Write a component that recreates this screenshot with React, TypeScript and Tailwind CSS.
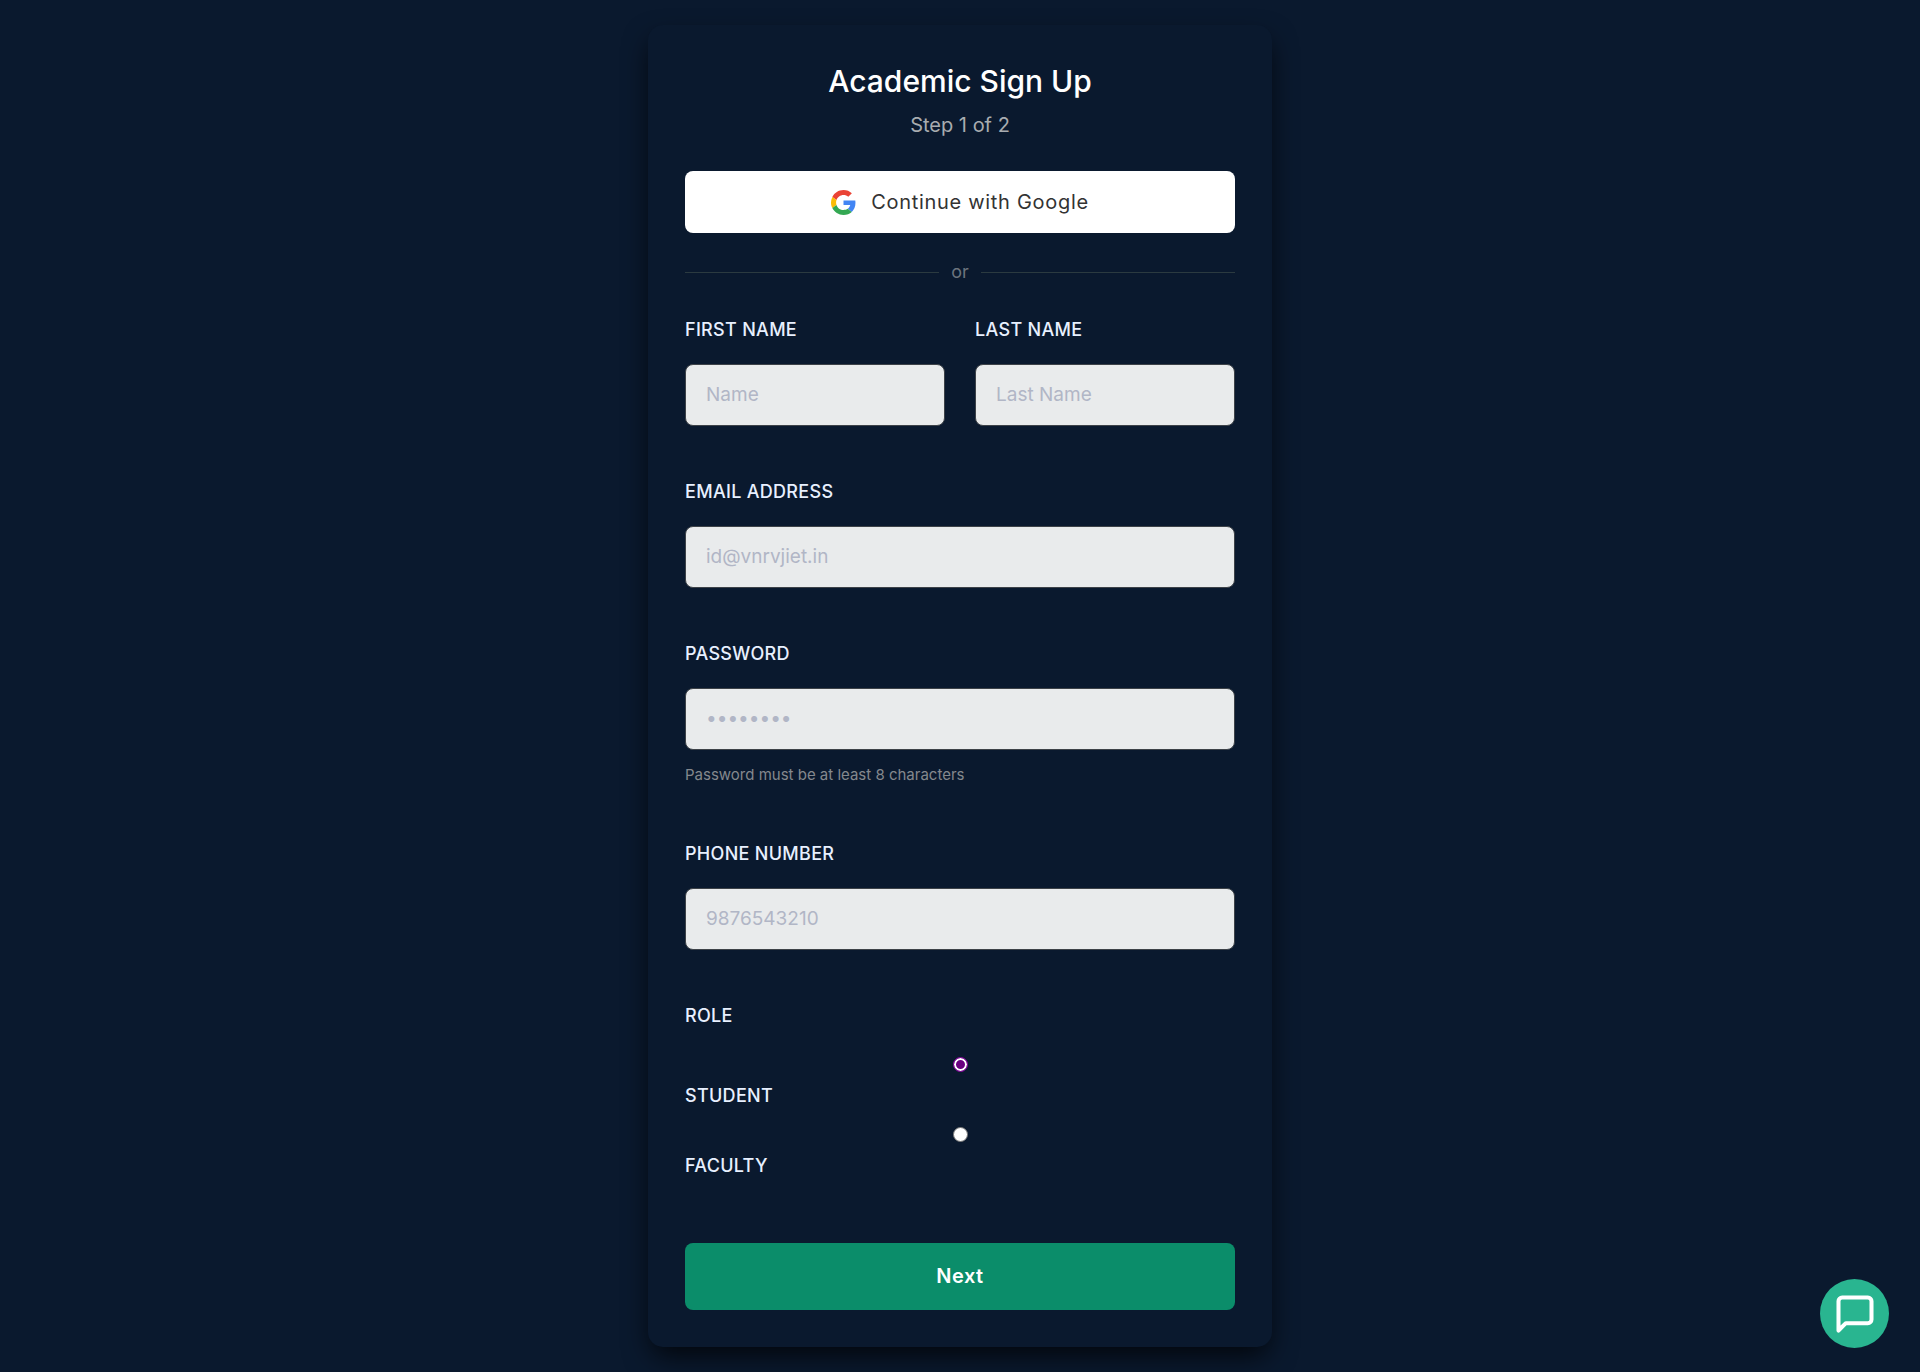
import React, { useState } from "react";

const labelClass =
  "block text-lg leading-6 font-medium tracking-[0.3px] text-[#e8f0ff] uppercase";
const inputClass =
  "mt-[22px] block h-[62px] w-full min-w-0 rounded-lg border border-[#3d4248] bg-[#e9ebec] px-5 pb-0.5 text-[19px] text-gray-800 placeholder:text-[#b1b6c6] placeholder:opacity-100 focus:outline-2 focus:outline-[#29b590]";

function GoogleLogo() {
  return (
    <svg viewBox="0 0 48 48" className="size-[25px]" aria-hidden="true">
      <path fill="#EA4335" d="M24 9.5c3.54 0 6.71 1.22 9.21 3.6l6.85-6.85C35.9 2.38 30.47 0 24 0 14.62 0 6.51 5.38 2.56 13.22l7.98 6.19C12.43 13.72 17.74 9.5 24 9.5z" />
      <path fill="#4285F4" d="M46.98 24.55c0-1.57-.15-3.09-.38-4.55H24v9.02h12.94c-.58 2.96-2.26 5.48-4.78 7.18l7.73 6c4.51-4.18 7.09-10.36 7.09-17.65z" />
      <path fill="#FBBC05" d="M10.53 28.59c-.48-1.45-.76-2.99-.76-4.59s.27-3.14.76-4.59l-7.98-6.19C.92 16.46 0 20.12 0 24c0 3.88.92 7.54 2.56 10.78l7.97-6.19z" />
      <path fill="#34A853" d="M24 48c6.48 0 11.93-2.13 15.89-5.81l-7.73-6c-2.15 1.45-4.92 2.3-8.16 2.3-6.26 0-11.57-4.22-13.47-9.91l-7.98 6.19C6.51 42.62 14.62 48 24 48z" />
    </svg>
  );
}

type FieldProps = {
  id: string;
  label: string;
  type?: string;
  placeholder: string;
  hint?: string;
};

function Field({ id, label, type = "text", placeholder, hint }: FieldProps) {
  return (
    <div className="min-w-0 flex-1">
      <label htmlFor={id} className={labelClass}>
        {label}
      </label>
      <input
        id={id}
        type={type}
        placeholder={placeholder}
        aria-describedby={hint ? `${id}-hint` : undefined}
        className={inputClass}
      />
      {hint && (
        <p id={`${id}-hint`} className="mt-3 text-[15px] leading-[26px] text-[#84888d]">
          {hint}
        </p>
      )}
    </div>
  );
}

export default function App() {
  const [role, setRole] = useState("student");

  return (
    <main className="min-h-screen bg-[#0a192e] px-4 py-[25px] font-['Inter',sans-serif]">
      <form
        onSubmit={(e) => e.preventDefault()}
        className="mx-auto w-full max-w-[624px] rounded-[15px] bg-[#0a192e] p-[37px] shadow-[0_12px_28px_-4px_rgba(0,0,0,0.8)]"
      >
        <h1 className="text-center text-3xl leading-[38px] font-medium text-white">Academic Sign Up</h1>
        <p className="mt-[11px] text-center text-xl leading-7 text-[#a8acb0]">Step 1 of 2</p>

        <button
          type="button"
          className="mt-8 flex h-[62px] w-full items-center justify-center gap-[15px] rounded-lg bg-white text-xl tracking-[0.7px] text-[#333333]"
        >
          <GoogleLogo />
          Continue with Google
        </button>

        <div className="mt-[27px] flex items-center gap-3">
          <span className="h-px flex-1 bg-[#2b3a40]" />
          <span className="text-lg leading-6 text-[#6c747d]">or</span>
          <span className="h-px flex-1 bg-[#2b3a40]" />
        </div>

        <div className="mt-[34px] flex flex-col gap-[54px]">
          <div className="flex gap-[30px]">
            <Field id="first-name" label="First Name" placeholder="Name" />
            <Field id="last-name" label="Last Name" placeholder="Last Name" />
          </div>
          <Field id="email" label="Email Address" type="email" placeholder="id@vnrvjiet.in" />
          <Field
            id="password"
            label="Password"
            type="password"
            placeholder="••••••••"
            hint="Password must be at least 8 characters"
          />
          <Field id="phone" label="Phone Number" type="tel" placeholder="9876543210" />
        </div>

        <fieldset className="mt-[54px]">
          <legend className={labelClass}>Role</legend>
          <div className="mt-[29px] flex flex-col gap-[19px]">
            {["Student", "Faculty"].map((name) => (
              <label key={name} className={labelClass}>
                <input
                  type="radio"
                  name="role"
                  value={name.toLowerCase()}
                  checked={role === name.toLowerCase()}
                  onChange={(e) => setRole(e.target.value)}
                  className="mx-auto mb-3 block size-[15px] appearance-none rounded-full border border-[#767676] bg-white checked:border-[#8a0ba0] checked:bg-[#6a0080] checked:shadow-[inset_0_0_0_2px_white]"
                />
                {name}
              </label>
            ))}
          </div>
        </fieldset>

        <button
          type="submit"
          className="mt-[65px] h-[67px] w-full rounded-lg bg-[#0b8d6a] pb-0.5 text-xl font-semibold tracking-wide text-white"
        >
          Next
        </button>
      </form>

      <button
        type="button"
        aria-label="Open chat"
        className="fixed right-[31px] bottom-6 flex size-[69px] items-center justify-center rounded-full bg-[#29b590] text-white"
      >
        <svg viewBox="0 0 24 24" className="size-11" fill="none" stroke="currentColor" strokeWidth="2.2" strokeLinejoin="round" strokeLinecap="round" aria-hidden="true">
          <path d="M21 15a2 2 0 0 1-2 2H7l-4 4V5a2 2 0 0 1 2-2h14a2 2 0 0 1 2 2z" />
        </svg>
      </button>
    </main>
  );
}
